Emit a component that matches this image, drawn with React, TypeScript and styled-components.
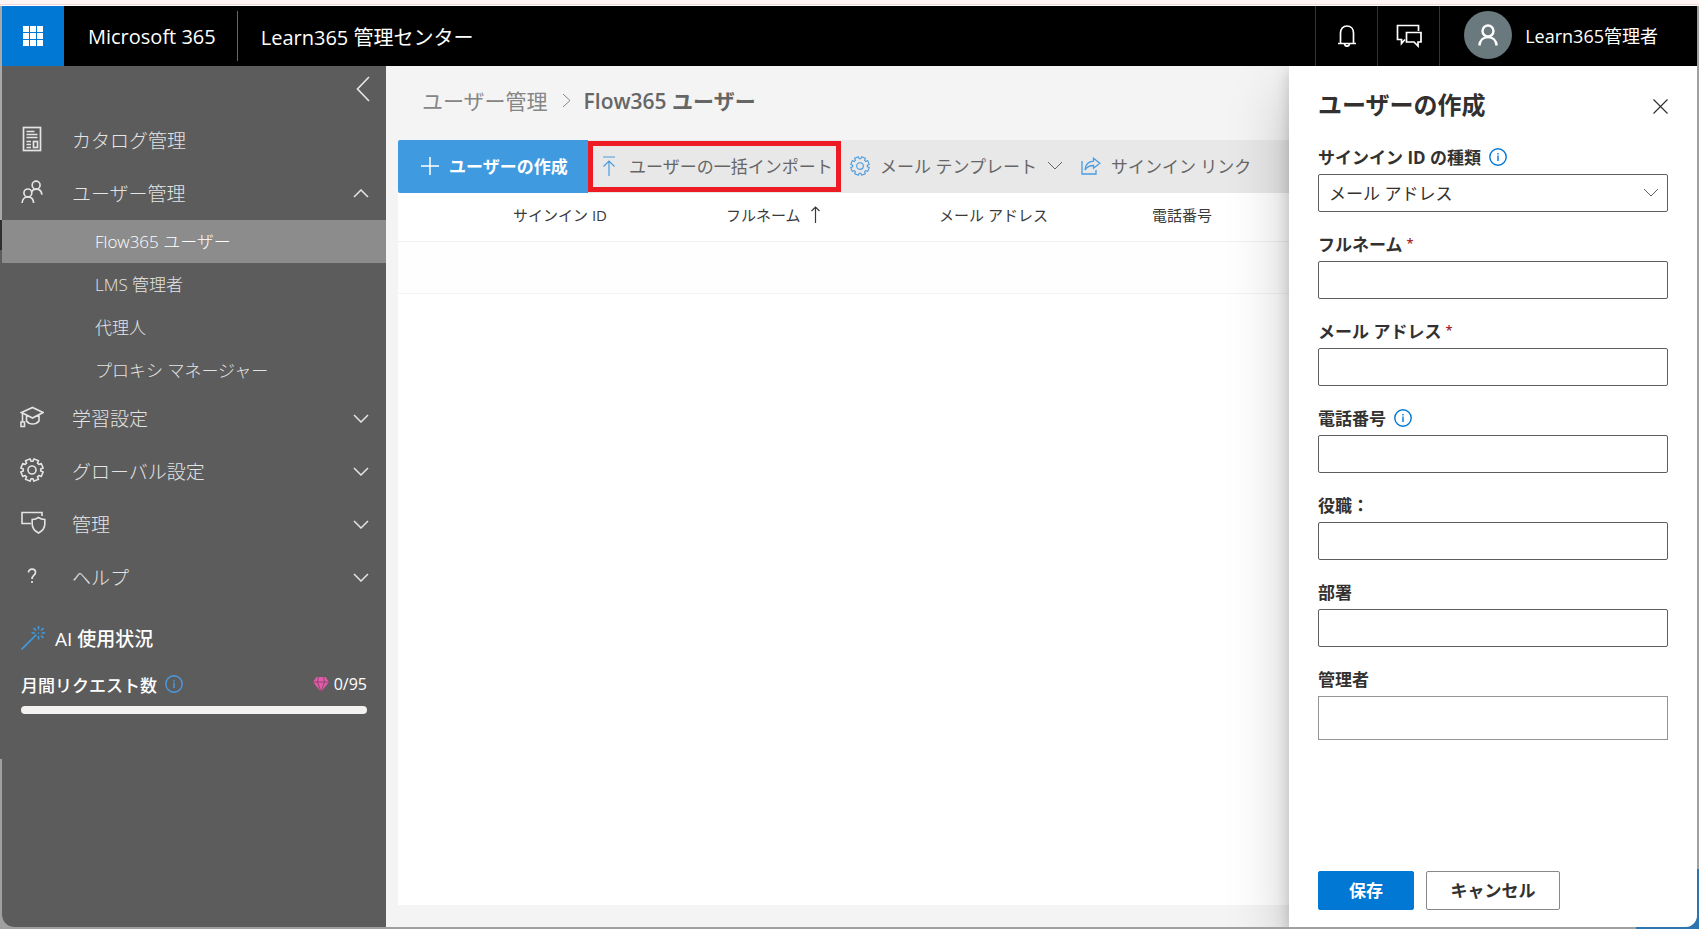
import React from "react";
import styled, { createGlobalStyle, css } from "styled-components";

const GlobalStyle = createGlobalStyle`
  *, *::before, *::after { box-sizing: border-box; }
  body {
    margin: 0;
    font-family: "Open Sans", "Noto Sans CJK JP", sans-serif;
    font-size: 17px;
    color: #323130;
  }
  button, input, select { font: inherit; color: inherit; }
  button { border: 0; background: none; padding: 0; }
  svg { display: block; flex: none; }
  ul { list-style: none; margin: 0; padding: 0; }
  a { color: inherit; text-decoration: none; }
  h1, h2 { margin: 0; }
`;

/* Shell */

const Desktop = styled.div`
  display: flex;
  min-height: 100vh;
  padding: 6px 2px 2px;
  background:
    linear-gradient(#2e75b0, #2e75b0) right bottom / 63px 60px no-repeat,
    linear-gradient(#fff5f5 4px, #f6d5d5 4px, #f6d5d5 5px, #fff 5px) top / 100% 6px no-repeat,
    linear-gradient(#a8a8a8 220px, #2e2e2e 220px, #2e2e2e 250px, #5c5c5c 250px, #5c5c5c 759px, #a0a0a0 759px) left / 2px 100% no-repeat,
    #a0a0a0;
`;

const Window = styled.div`
  flex: 1;
  min-width: 0;
  display: flex;
  flex-direction: column;
  overflow: hidden;
  border-radius: 0 0 12px 12px;
  background: #f4f4f4;
`;

const TopBar = styled.header`
  position: relative;
  z-index: 2;
  display: flex;
  align-items: center;
  height: 60px;
  background: #000;
  color: #fff;
  font-size: 20px;
`;

const Launcher = styled.button`
  display: grid;
  place-items: center;
  width: 62px;
  height: 60px;
  background: #0078d4;
`;

const Brand = styled.a`
  display: flex;
  align-items: center;
  height: 50px;
  padding: 0 21px 0 24px;
  border-right: 1px solid #666;
`;

const AppName = styled.span`
  padding-left: 23px;
`;

const TopActions = styled.div`
  display: flex;
  align-self: stretch;
  margin-left: auto;
`;

const TopAction = styled.button`
  display: grid;
  place-items: center;
  width: 62px;
  border-left: 1px solid #333;
`;

const Account = styled.button`
  display: flex;
  align-items: center;
  gap: 13px;
  padding: 0 39px 2px 24px;
  border-left: 1px solid #333;
  font-size: 18px;
`;

const Avatar = styled.span`
  display: grid;
  place-items: center;
  width: 48px;
  height: 48px;
  border-radius: 50%;
  background: #69797e;
`;

const Body = styled.div`
  position: relative;
  flex: 1;
  display: flex;
`;

/* Sidebar */

const Sidebar = styled.nav`
  flex: none;
  width: 384px;
  background: #5c5c5c;
  color: #e4e4e4;
  font-weight: 300;
`;

const CollapseRow = styled.div`
  display: flex;
  justify-content: flex-end;
  align-items: flex-start;
  height: 48px;
  padding: 10px 16px 0 0;
`;

const navRow = css`
  display: flex;
  align-items: center;
  width: 100%;
  height: 53px;
  padding: 0 17px 0 18px;
  font-size: 19px;
  text-align: left;
`;
const NavButton = styled.button`${navRow}`;
const NavLink = styled.a`${navRow}`;

const NavIcon = styled.span`
  display: grid;
  place-items: center;
  width: 24px;
  height: 28px;
  margin: 0 28px 4px 0;
`;

const NavText = styled.span`
  flex: 1;
  padding-bottom: 2px;
`;

const SubLink = styled.a<{ $active?: boolean }>`
  display: flex;
  align-items: center;
  height: 43px;
  padding: 0 0 2px 93px;
  font-size: 17px;
  color: ${(p) => (p.$active ? "#fff" : "inherit")};
  background: ${(p) => (p.$active ? "#8c8c8c" : "transparent")};
`;

const Usage = styled.section`
  padding: 20px 19px 0;
  color: #fff;
  font-weight: 500;
`;

const UsageTitle = styled.h2`
  display: flex;
  align-items: center;
  gap: 10px;
  height: 28px;
  font-size: 19px;
  font-weight: 500;
`;

const UsageRow = styled.div`
  display: flex;
  align-items: center;
  height: 24px;
  margin: 20px 0 10px;
`;

const Quota = styled.span`
  display: flex;
  align-items: center;
  gap: 5px;
  margin-left: auto;
  font-size: 16px;
  font-weight: 400;
`;

const Meter = styled.div`
  height: 8px;
  border-radius: 4px;
  background: #f3f2f1;
`;

const InfoButton = styled.button<{ $color: string }>`
  margin-left: 8px;
  color: ${(p) => p.$color};
`;

/* Main area */

const Main = styled.main`
  flex: 1;
  min-width: 0;
  display: flex;
  flex-direction: column;
  padding: 0 12px 22px;
`;

const Breadcrumb = styled.div`
  display: flex;
  align-items: center;
  height: 74px;
  padding: 0 0 6px 24px;
  font-size: 21px;
  color: #868686;
  svg { margin: 0 13px 0 14px; }
`;

const Current = styled.h1`
  font-size: 21px;
  font-weight: 600;
  color: #666;
`;

const Toolbar = styled.div`
  display: flex;
  height: 53px;
  border-radius: 2px;
  background: #e8e8e8;
  color: #666;
`;

const Tool = styled.button<{ $kind?: "primary" | "marked" }>`
  display: flex;
  align-items: center;
  padding: 0 9px 2px;
  white-space: nowrap;
  & > svg { margin-right: 10px; }
  & > svg + svg { margin: 0 0 0 10px; }
  ${(p) => p.$kind === "primary" && css`
    width: 190px;
    padding: 0 23px 2px;
    border-radius: 2px 0 0 2px;
    background: #3f9ae0;
    color: #fff;
    font-weight: 700;
  `}
  ${(p) => p.$kind === "marked" && css`
    width: 253px;
    height: 51px;
    align-self: center;
    border: 5px solid #ed1c24;
    & > svg { margin-right: 13px; }
  `}
`;

const Sheet = styled.div`
  flex: 1;
  background: #fff;
`;

const Table = styled.table`
  width: 100%;
  table-layout: fixed;
  border-collapse: collapse;
  font-size: 15px;
  color: #3b3a39;
  th {
    height: 48px;
    width: 213px;
    padding: 0 0 4px;
    border-bottom: 1px solid #f0f0f0;
    text-align: left;
    font-weight: 400;
  }
  th:first-child { width: 115px; }
  th:last-child { width: auto; }
  td { height: 52px; padding: 0; border-bottom: 1px solid #f3f3f3; background: #fefefe; }
`;

const SortButton = styled.button`
  display: flex;
  align-items: center;
  gap: 10px;
`;

/* Side panel */

const Panel = styled.form`
  position: absolute;
  top: 0;
  right: 0;
  bottom: 0;
  display: flex;
  flex-direction: column;
  width: 408px;
  padding: 18px 29px 17px;
  background: #fff;
  box-shadow: 0 26px 58px rgba(0, 0, 0, 0.22), 0 5px 14px rgba(0, 0, 0, 0.18);
`;

const PanelHead = styled.div`
  display: flex;
  align-items: center;
  justify-content: space-between;
  height: 44px;
  margin-bottom: 17px;
`;

const PanelTitle = styled.h2`
  padding-bottom: 5px;
  font-size: 24px;
  font-weight: 700;
`;

const Fields = styled.div`
  flex: 1;
  display: flex;
  flex-direction: column;
  gap: 20px;
`;

const Field = styled.div`
  position: relative;
`;

const LabelRow = styled.div`
  display: flex;
  align-items: center;
  height: 24px;
  margin-bottom: 5px;
  font-weight: 700;
  label { padding-bottom: 2px; }
`;

const Required = styled.span`
  margin: 0 0 2px 4px;
  color: #a4262c;
  font-size: 13px;
  font-weight: 600;
`;

const box = css`
  display: block;
  width: 100%;
  height: 38px;
  padding: 0 10px;
  border: 1px solid #605e5c;
  border-radius: 2px;
  background: #fff;
`;
const TextBox = styled.input<{ $picker?: boolean }>`
  ${box}
  ${(p) => p.$picker && css`
    height: 44px;
    border-color: #979593;
    border-radius: 0;
  `}
`;
const SelectBox = styled.select`
  ${box}
  appearance: none;
`;

const SelectArrow = styled.span`
  position: absolute;
  right: 9px;
  bottom: 15px;
  color: #605e5c;
  pointer-events: none;
`;

const Actions = styled.div`
  display: flex;
  gap: 12px;
`;

const ActionButton = styled.button<{ $primary?: boolean }>`
  width: ${(p) => (p.$primary ? 96 : 134)}px;
  height: 39px;
  padding-bottom: 2px;
  border: 1px solid ${(p) => (p.$primary ? "#0078d4" : "#8a8886")};
  border-radius: 2px;
  background: ${(p) => (p.$primary ? "#0078d4" : "#fff")};
  color: ${(p) => (p.$primary ? "#fff" : "#323130")};
  font-weight: 700;
`;

/* Icons */

type IconProps = { w: number; h?: number; vb?: string; sw?: number; color?: string; children: React.ReactNode };
const Icon = ({ w, h = w, vb, sw = 1, color = "currentColor", children }: IconProps) => (
  <svg width={w} height={h} viewBox={vb ?? `0 0 ${w} ${h}`} fill="none" stroke={color} strokeWidth={sw} aria-hidden="true">
    {children}
  </svg>
);

const Chevron = ({ up, sw = 1.5 }: { up?: boolean; sw?: number }) => (
  <Icon w={16} h={9} sw={sw}><path d={up ? "M1 8 8 1l7 7" : "M1 1l7 7 7-7"} /></Icon>
);

const gearPath = (() => {
  const teeth = 8;
  const step = (Math.PI * 2) / teeth;
  const pts: string[] = [];
  for (let i = 0; i < teeth; i++) {
    const a = (i + 0.5) * step - Math.PI / 2;
    [[-0.28, 8.8], [-0.22, 11.3], [0.22, 11.3], [0.28, 8.8]].forEach(([o, r]) => {
      pts.push(`${(12 + Math.cos(a + o) * r).toFixed(2)} ${(12 + Math.sin(a + o) * r).toFixed(2)}`);
    });
  }
  return `M${pts.join("L")}Z`;
})();
const Gear = ({ size, color, sw }: { size: number; color?: string; sw: number }) => (
  <Icon w={size} vb="0 0 24 24" color={color} sw={sw}>
    <path d={gearPath} strokeLinejoin="round" />
    <circle cx="12" cy="12" r="4" />
  </Icon>
);

const Info = () => (
  <Icon w={18} sw={1.4}>
    <circle cx="9" cy="9" r="8.2" />
    <path d="M9 7.500v5.500M9 5v1.400" />
  </Icon>
);

const CatalogIcon = () => (
  <Icon w={20} h={26} sw={1.7}>
    <rect x="1.500" y="1.500" width="17" height="23" />
    <path d="M4.500 5.500h8M4.500 8.500h11M4.500 11.500h11M4.500 15.500h4.500M4.500 18.500h4.500M4.500 21.500h4.500" />
    <rect x="11.500" y="15.500" width="4" height="6" />
  </Icon>
);
const PeopleIcon = () => (
  <Icon w={22} h={24} vb="0 0 24 26" sw={1.8}>
    <circle cx="16.500" cy="5.500" r="4.300" />
    <path d="M11.500 13c1-2 2.700-3.200 5-3.200 3.500 0 6 2.400 6.300 6.200" />
    <circle cx="7.500" cy="14" r="4.300" />
    <path d="M1.200 25c.2-4 2.800-6.700 6.300-6.700s6 2.700 6.300 6.700" />
  </Icon>
);
const CapIcon = () => (
  <Icon w={24} h={22} sw={1.6}>
    <path d="M1.500 6.500 12.500 1.500 23 6.500l-10.500 5.500zM6.500 9.500V15c1.500 2 3.500 3 6 3s5-1 6.500-3V9.500" />
    <path d="M2.500 7v9M1 16h3.500v4.500H1z" />
  </Icon>
);
const ShieldIcon = () => (
  <Icon w={26} h={23} sw={1.6}>
    <path d="M11 12.500H2V1.500h20V5" />
    <path d="M18.500 6.500c2 1.500 4 2 6.300 2v4.500c0 4-2.500 7-6.300 9-3.800-2-6.300-5-6.300-9V8.500c2.300 0 4.300-.5 6.300-2z" />
  </Icon>
);
const HelpIcon = () => (
  <Icon w={10} h={16} sw={1.7}>
    <path d="M1.500 4.500C1.500 2.500 3 1.200 5 1.200s3.500 1.300 3.500 3.200C8.500 7.200 5 7 5 11M5 13v2" />
  </Icon>
);
const WandIcon = () => (
  <Icon w={24} h={24} sw={1.7} color="#3f9ae0">
    <path d="M.5 23.500 15.500 8.500M17.500 0v3.500M17.500 10v3.500M10.500 7H14M20.500 7H24M12.500 2l2.500 2.500M22.500 2 20 4.500M20 9.500l2.500 2.500M17 7h1" />
  </Icon>
);
const GemIcon = () => (
  <Icon w={16} h={15} sw={0.8} color="#7c3f63">
    <path d="M3.500 0h9L16 5 8 15 0 5z" fill="#e05ca8" stroke="none" />
    <path d="M5.500 0 4.500 5 8 15l3.500-10-1-5M0 5h16" />
  </Icon>
);

/* Data */

const sections = [
  { label: "学習設定", icon: <CapIcon /> },
  { label: "グローバル設定", icon: <Gear size={24} sw={1.6} /> },
  { label: "管理", icon: <ShieldIcon /> },
  { label: "ヘルプ", icon: <HelpIcon /> },
];
const userPages = ["Flow365 ユーザー", "LMS 管理者", "代理人", "プロキシ マネージャー"];
const fields = [
  { id: "fullName", label: "フルネーム", required: true },
  { id: "email", label: "メール アドレス", required: true },
  { id: "phone", label: "電話番号", info: true },
  { id: "jobTitle", label: "役職：" },
  { id: "department", label: "部署" },
  { id: "manager", label: "管理者", picker: true },
];
const accent = "#4a9be0";

export default function App() {
  return (
    <Desktop>
      <GlobalStyle />
      <Window>
        <TopBar>
          <Launcher aria-label="アプリ起動ツール">
            <svg width="20" height="20" viewBox="0 0 20 20" fill="#fff">
              {[0, 7, 14].map((y) => [0, 7, 14].map((x) => <rect key={`${x}-${y}`} x={x} y={y} width="6" height="6" />))}
            </svg>
          </Launcher>
          <Brand href="#">Microsoft 365</Brand>
          <AppName>Learn365 管理センター</AppName>
          <TopActions>
            <TopAction aria-label="通知">
              <Icon w={20} h={22} sw={1.7}>
                <path d="M1 18.500h18M3.500 18.500V8c0-4 2.500-7 6.500-7s6.500 3 6.500 7v10.500M7.500 19c.3 1.400 1.200 2.200 2.500 2.200s2.200-.8 2.500-2.200" />
              </Icon>
            </TopAction>
            <TopAction aria-label="フィードバック">
              <Icon w={26} h={24} sw={1.7}>
                <path d="M9 15.500 5.500 19.500v-4H1.500V1.500h21V7" />
                <path d="M10.500 8.500h14.500V18h-3v4l-4-4h-7.500z" />
              </Icon>
            </TopAction>
            <Account>
              <Avatar>
                <Icon w={20} h={22} sw={2.4}>
                  <circle cx="10" cy="7" r="5.500" />
                  <path d="M1.300 21.500c.6-5 4-8.500 8.700-8.500s8.100 3.500 8.700 8.500" />
                </Icon>
              </Avatar>
              Learn365管理者
            </Account>
          </TopActions>
        </TopBar>

        <Body>
          <Sidebar>
            <CollapseRow>
              <button aria-label="折りたたむ">
                <Icon w={14} h={26} sw={1.7}><path d="M13 1 1.500 13 13 25" /></Icon>
              </button>
            </CollapseRow>
            <NavLink href="#">
              <NavIcon><CatalogIcon /></NavIcon>
              <NavText>カタログ管理</NavText>
            </NavLink>
            <NavButton aria-expanded="true">
              <NavIcon><PeopleIcon /></NavIcon>
              <NavText>ユーザー管理</NavText>
              <Chevron up />
            </NavButton>
            <ul>
              {userPages.map((page, i) => (
                <li key={page}><SubLink href="#" $active={i === 0}>{page}</SubLink></li>
              ))}
            </ul>
            {sections.map((s) => (
              <NavButton key={s.label} aria-expanded="false">
                <NavIcon>{s.icon}</NavIcon>
                <NavText>{s.label}</NavText>
                <Chevron />
              </NavButton>
            ))}
            <Usage>
              <UsageTitle><WandIcon />AI 使用状況</UsageTitle>
              <UsageRow>
                月間リクエスト数
                <InfoButton $color={accent} aria-label="詳細"><Info /></InfoButton>
                <Quota><GemIcon />0/95</Quota>
              </UsageRow>
              <Meter role="progressbar" aria-label="月間リクエスト数" aria-valuenow={0} aria-valuemax={95} />
            </Usage>
          </Sidebar>

          <Main>
            <Breadcrumb>
              <a href="#">ユーザー管理</a>
              <Icon w={9} h={15}><path d="M1 1l7 6.500L1 14" /></Icon>
              <Current>Flow365 ユーザー</Current>
            </Breadcrumb>
            <Toolbar>
              <Tool $kind="primary">
                <Icon w={18} sw={1.5}><path d="M9 0v18M0 9h18" /></Icon>
                ユーザーの作成
              </Tool>
              <Tool $kind="marked">
                <Icon w={14} h={20} color={accent} sw={1.2}><path d="M1 1h12M7 20V5M1.500 10.500 7 5l5.500 5.500" /></Icon>
                ユーザーの一括インポート
              </Tool>
              <Tool>
                <Gear size={20} sw={1.3} color={accent} />
                メール テンプレート
                <Chevron sw={1} />
              </Tool>
              <Tool>
                <Icon w={20} h={18} color={accent} sw={1.3}>
                  <path d="M1 4v13h14v-4M12.500 1.200 18.800 6.200l-6.300 5V8.500c-4 0-6.500 1.200-8.500 4.500.5-5 3.500-8.500 8.500-8.800z" />
                </Icon>
                サインイン リンク
              </Tool>
            </Toolbar>
            <Sheet>
              <Table>
                <thead>
                  <tr>
                    <th />
                    <th scope="col">サインイン ID</th>
                    <th scope="col" aria-sort="ascending">
                      <SortButton>
                        フルネーム
                        <Icon w={9} h={17} sw={1.2}><path d="M4.500 17V1M.5 5l4-4 4 4" /></Icon>
                      </SortButton>
                    </th>
                    <th scope="col">メール アドレス</th>
                    <th scope="col">電話番号</th>
                    <th />
                  </tr>
                </thead>
                <tbody>
                  <tr><td colSpan={6} /></tr>
                </tbody>
              </Table>
            </Sheet>
          </Main>

          <Panel onSubmit={(e) => e.preventDefault()}>
            <PanelHead>
              <PanelTitle>ユーザーの作成</PanelTitle>
              <button type="button" aria-label="閉じる">
                <Icon w={15} sw={1.2}><path d="M.5.5l14 14M14.500.5l-14 14" /></Icon>
              </button>
            </PanelHead>
            <Fields>
              <Field>
                <LabelRow>
                  <label htmlFor="signInType">サインイン ID の種類</label>
                  <InfoButton type="button" $color="#0078d4" aria-label="詳細"><Info /></InfoButton>
                </LabelRow>
                <SelectBox id="signInType">
                  <option>メール アドレス</option>
                </SelectBox>
                <SelectArrow><Chevron sw={1} /></SelectArrow>
              </Field>
              {fields.map((f) => (
                <Field key={f.id}>
                  <LabelRow>
                    <label htmlFor={f.id}>{f.label}</label>
                    {f.required && <Required>*</Required>}
                    {f.info && <InfoButton type="button" $color="#0078d4" aria-label="詳細"><Info /></InfoButton>}
                  </LabelRow>
                  <TextBox id={f.id} type="text" $picker={f.picker} />
                </Field>
              ))}
            </Fields>
            <Actions>
              <ActionButton type="submit" $primary>保存</ActionButton>
              <ActionButton type="button">キャンセル</ActionButton>
            </Actions>
          </Panel>
        </Body>
      </Window>
    </Desktop>
  );
}
